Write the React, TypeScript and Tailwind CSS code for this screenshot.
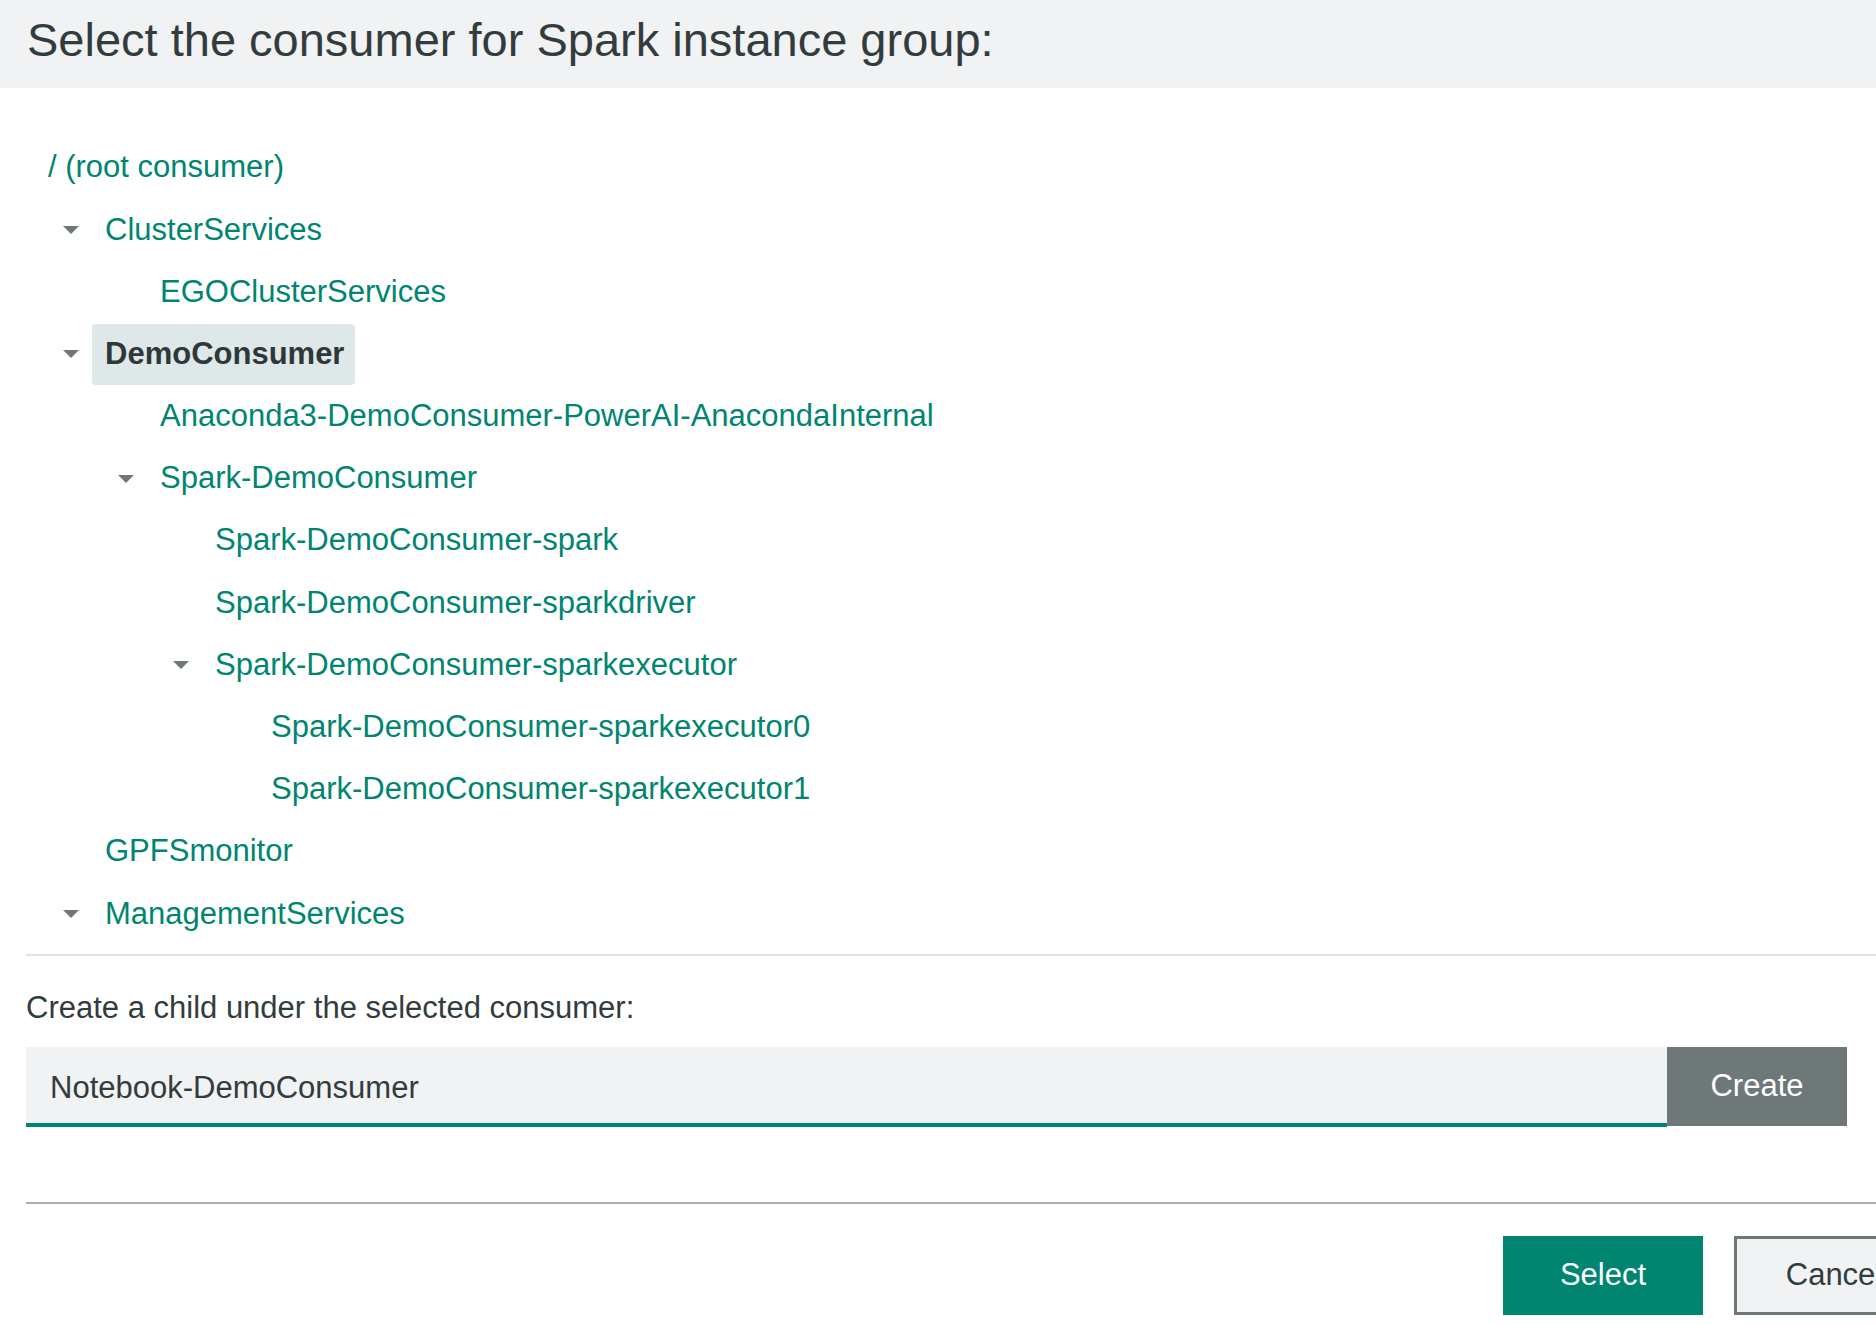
import React from "react";

type Row = { label: string; level: number; arrow?: boolean; selected?: boolean };

const rows: Row[] = [
  { label: "/ (root consumer)", level: 0 },
  { label: "ClusterServices", level: 1, arrow: true },
  { label: "EGOClusterServices", level: 2 },
  { label: "DemoConsumer", level: 1, arrow: true, selected: true },
  { label: "Anaconda3-DemoConsumer-PowerAI-AnacondaInternal", level: 2 },
  { label: "Spark-DemoConsumer", level: 2, arrow: true },
  { label: "Spark-DemoConsumer-spark", level: 3 },
  { label: "Spark-DemoConsumer-sparkdriver", level: 3 },
  { label: "Spark-DemoConsumer-sparkexecutor", level: 3, arrow: true },
  { label: "Spark-DemoConsumer-sparkexecutor0", level: 4 },
  { label: "Spark-DemoConsumer-sparkexecutor1", level: 4 },
  { label: "GPFSmonitor", level: 1 },
  { label: "ManagementServices", level: 1, arrow: true },
];

const textPad = ["pl-[48px]", "pl-[105px]", "pl-[160px]", "pl-[215px]", "pl-[271px]"];
const arrowPad = ["pl-[5px]", "pl-[63px]", "pl-[118px]", "pl-[173px]", "pl-[229px]"];

function Caret() {
  return (
    <svg width="16" height="8" viewBox="0 0 16 8" className="shrink-0">
      <polygon points="0,0 16,0 8,8" fill="#6f7878" />
    </svg>
  );
}

function TreeRow({ row }: { row: Row }) {
  const pad = row.arrow ? arrowPad[row.level] : textPad[row.level];
  return (
    <div className={`flex h-[62.2px] items-center ${pad}`}>
      {row.arrow && <Caret />}
      {row.arrow && <div className="w-[26px] shrink-0" />}
      {row.selected ? (
        <span className="-ml-[13px] flex h-[61px] items-center rounded-[4px] bg-[#dfe8e9] pl-[13px] pr-[11px] font-bold text-[#2f3838]">
          {row.label}
        </span>
      ) : (
        <span className="text-[#008571]">{row.label}</span>
      )}
    </div>
  );
}

export default function App() {
  return (
    <div
      className="h-[1324px] w-[1876px] overflow-hidden bg-white text-[31px] text-[#323c3c]"
      style={{ fontFamily: '"Liberation Sans", Arial, sans-serif' }}
    >
      <div className="w-[1964px]">
        <div className="flex h-[88px] items-start bg-[#f0f2f3] pl-[27px] pt-[13px]">
          <h1 className="text-[47px] leading-[54px] font-normal text-[#323c3c]">
            Select the consumer for Spark instance group:
          </h1>
        </div>

        <div className="pt-[48.5px]">
          {rows.map((r, i) => (
            <TreeRow key={i} row={r} />
          ))}
        </div>

        <div className="ml-[26px] mt-[9px] h-[2px] bg-[#dde6e6]" />

        <div className="ml-[26px] mt-[34px] leading-[36px]">Create a child under the selected consumer:</div>

        <div className="ml-[26px] mt-[21px] flex">
          <div className="flex h-[80px] w-[1641px] items-center border-b-[4px] border-[#008571] bg-[#f0f2f3] pl-[24px] pt-[7px]">
            Notebook-DemoConsumer
          </div>
          <div className="flex h-[79px] w-[180px] items-center justify-center bg-[#6f7878] text-white">
            Create
          </div>
        </div>

        <div className="ml-[26px] mt-[75px] h-[2px] bg-[#a8b0b3]" />

        <div className="mt-[32px] flex justify-end gap-[31px] pr-[30px]">
          <div className="flex h-[79px] w-[200px] items-center justify-center bg-[#008571] text-white">
            Select
          </div>
          <div className="flex h-[79px] w-[200px] items-center justify-center border-[3px] border-[#6f7878] bg-[#f0f2f3] text-[#323c3c]">
            Cancel
          </div>
        </div>
      </div>
    </div>
  );
}
